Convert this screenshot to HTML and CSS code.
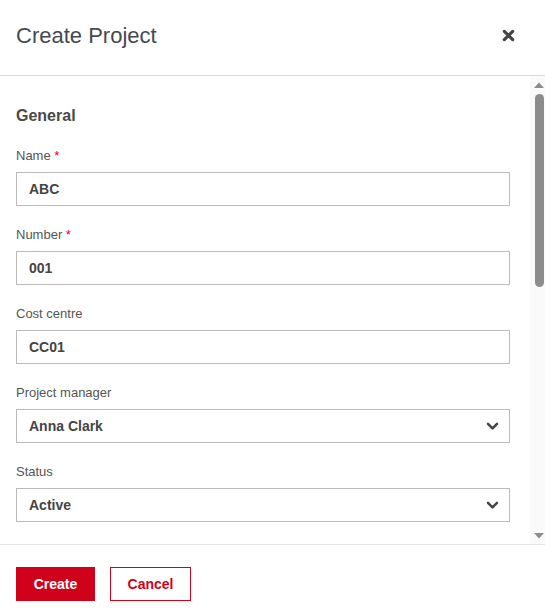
FILE: index.html
```html
<!DOCTYPE html>
<html lang="en">
<head>
<meta charset="utf-8">
<title>Create Project</title>
<link rel="stylesheet" href="styles.css">
</head>
<body>
<div class="modal">
  <header class="modal-header">
    <h1 class="modal-title">Create Project</h1>
    <button class="close-btn" aria-label="Close">
      <svg viewBox="0 0 14 14" width="13" height="13"><path d="M2.5 2.5 L11.5 11.5 M11.5 2.5 L2.5 11.5" stroke="#444" stroke-width="3.4" stroke-linecap="round"/></svg>
    </button>
  </header>
  <div class="modal-body">
    <main class="body-content">
      <h2 class="section-title">General</h2>
      <div class="field">
        <label class="field-label">Name <span class="req">*</span></label>
        <div class="input">ABC</div>
      </div>
      <div class="field">
        <label class="field-label">Number <span class="req">*</span></label>
        <div class="input">001</div>
      </div>
      <div class="field">
        <label class="field-label">Cost centre</label>
        <div class="input">CC01</div>
      </div>
      <div class="field">
        <label class="field-label">Project manager</label>
        <div class="input select">Anna Clark
          <svg class="chev" viewBox="0 0 14 10" width="13" height="9"><path d="M2 2 L7 7 L12 2" fill="none" stroke="#444" stroke-width="2.8" stroke-linecap="round" stroke-linejoin="round"/></svg>
        </div>
      </div>
      <div class="field">
        <label class="field-label">Status</label>
        <div class="input select">Active
          <svg class="chev" viewBox="0 0 14 10" width="13" height="9"><path d="M2 2 L7 7 L12 2" fill="none" stroke="#444" stroke-width="2.8" stroke-linecap="round" stroke-linejoin="round"/></svg>
        </div>
      </div>
    </main>
    <div class="scrollbar" aria-hidden="true">
      <div class="sb-btn"><svg viewBox="0 0 10 6" width="10" height="6"><path d="M0 6 L5 0.5 L10 6 Z" fill="#8c8c8c"/></svg></div>
      <div class="sb-track"><div class="sb-thumb"></div></div>
      <div class="sb-btn"><svg viewBox="0 0 10 6" width="10" height="6"><path d="M0 0 L5 5.5 L10 0 Z" fill="#8c8c8c"/></svg></div>
    </div>
  </div>
  <footer class="modal-footer">
    <button class="btn btn-primary">Create</button>
    <button class="btn btn-outline">Cancel</button>
  </footer>
</div>
</body>
</html>
```
FILE: styles.css
```css
* { box-sizing: border-box; }
html, body { margin: 0; padding: 0; height: 100%; overflow: hidden; }
body {
  font-family: "Liberation Sans", Arial, sans-serif;
  color: #444;
  background: #fff;
}
.modal {
  display: flex;
  flex-direction: column;
  height: 100vh;
}
.modal-header {
  height: 76px;
  flex: 0 0 76px;
  border-bottom: 1px solid #dcdcdc;
  display: flex;
  align-items: center;
  justify-content: space-between;
  padding: 0 30px 4px 16px;
}
.modal-title {
  margin: 0;
  font-size: 22px;
  font-weight: normal;
  color: #454a52;
  line-height: 28px;
}
.close-btn {
  border: 0;
  background: none;
  padding: 0;
  width: 13px;
  height: 13px;
  display: flex;
}
.modal-body {
  flex: 1 1 auto;
  min-height: 0;
  display: flex;
}
.body-content {
  flex: 1 1 auto;
  overflow: hidden;
  padding: 30px 20px 30px 16px;
}
.scrollbar {
  flex: 0 0 15px;
  background: #fafafa;
  display: flex;
  flex-direction: column;
}
.sb-btn {
  height: 17px;
  flex: 0 0 17px;
  display: flex;
  align-items: center;
  justify-content: flex-end;
  padding-right: 1px;
}
.sb-track {
  flex: 1 1 auto;
  padding: 1px 1px 0 5px;
}
.sb-thumb {
  height: 193px;
  background: #8c8c8c;
  border-radius: 5px;
}
.section-title {
  margin: 0 0 22px;
  font-size: 16px;
  line-height: 20px;
  font-weight: bold;
  color: #4a4a4a;
}
.field { margin-bottom: 21px; }
.field-label {
  display: block;
  font-size: 13px;
  line-height: 16px;
  color: #555;
  margin-bottom: 8px;
}
.req { color: #e4002b; }
.input {
  height: 34px;
  border: 1px solid #bbb;
  padding: 0 12px;
  display: flex;
  align-items: center;
  justify-content: space-between;
  font-size: 14px;
  font-weight: bold;
  color: #444;
}
.chev { margin-right: -2px; }
.modal-footer {
  flex: 0 0 71px;
  border-top: 1px solid #e3e3e3;
  display: flex;
  gap: 15px;
  padding: 22px 16px 0;
  align-items: flex-start;
}
.btn {
  height: 34px;
  font-family: "Liberation Sans", Arial, sans-serif;
  font-size: 14px;
  font-weight: bold;
  padding: 0;
  cursor: pointer;
}
.btn-primary {
  width: 79px;
  background: #d0021b;
  color: #fff;
  border: 0;
}
.btn-outline {
  width: 81px;
  background: #fff;
  color: #d0021b;
  border: 1px solid #d0021b;
}
```
